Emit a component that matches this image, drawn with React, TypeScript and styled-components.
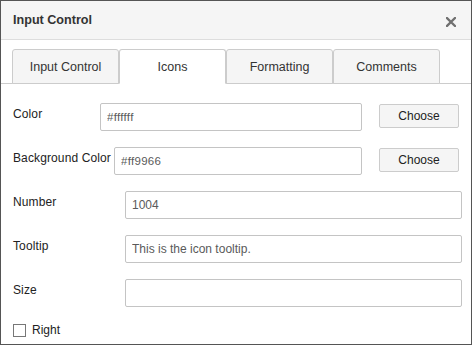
import React, { useState } from 'react';
import styled, { createGlobalStyle } from 'styled-components';

const GlobalStyle = createGlobalStyle`
  html, body {
    margin: 0;
    padding: 0;
    background: #ffffff;
  }
  * {
    box-sizing: border-box;
  }
`;

const tabs = ['Input Control', 'Icons', 'Formatting', 'Comments'];

export default function App() {
  const [active, setActive] = useState(1);
  const [right, setRight] = useState(false);

  return (
    <>
      <GlobalStyle />
      <Dialog>
        <Header>
          <Title>Input Control</Title>
          <Close aria-label="Close">
            <svg width="10" height="10" viewBox="0 0 10 10">
              <path d="M1 1 L9 9 M9 1 L1 9" stroke="#707070" strokeWidth="2.3" strokeLinecap="square" />
            </svg>
          </Close>
        </Header>
        <TabBar>
          {tabs.map((t, i) => (
            <Tab key={t} $active={i === active} onClick={() => setActive(i)}>
              {t}
            </Tab>
          ))}
        </TabBar>
        <Body>
          <Row>
            <Label $min={87}>Color</Label>
            <Input defaultValue="#ffffff" $small />
            <Button>Choose</Button>
          </Row>
          <Row>
            <Label $min={87}>Background Color</Label>
            <Input defaultValue="#ff9966" $small $gap={3} />
            <Button>Choose</Button>
          </Row>
          <Row $wide>
            <Label $min={112}>Number</Label>
            <Input defaultValue="1004" />
          </Row>
          <Row $wide>
            <Label $min={112}>Tooltip</Label>
            <Input defaultValue="This is the icon tooltip." />
          </Row>
          <Row $wide>
            <Label $min={112}>Size</Label>
            <Input defaultValue="" />
          </Row>
          <CheckRow>
            <Check type="checkbox" checked={right} onChange={() => setRight(!right)} />
            Right
          </CheckRow>
        </Body>
      </Dialog>
    </>
  );
}

const Dialog = styled.div`
  width: 472px;
  height: 345px;
  border: 1px solid #555555;
  background: #ffffff;
  font-family: "Liberation Sans", Arial, sans-serif;
  color: #333333;
  overflow: hidden;
`;

const Header = styled.div`
  height: 39px;
  background: #f5f5f5;
  border-bottom: 1px solid #dddddd;
  display: flex;
  align-items: center;
  justify-content: space-between;
  padding: 0 15px 0 12px;
`;

const Title = styled.div`
  font-size: 12.6px;
  font-weight: bold;
  color: #333333;
`;

const Close = styled.div`
  display: flex;
  width: 10px;
  height: 10px;
  margin-top: 3px;
  cursor: pointer;
`;

const TabBar = styled.div`
  display: flex;
  align-items: flex-end;
  height: 44px;
  padding-left: 11px;
  border-bottom: 1px solid #cccccc;
`;

const Tab = styled.div<{ $active?: boolean }>`
  width: 107px;
  height: 35px;
  margin-bottom: -1px;
  display: flex;
  align-items: center;
  justify-content: center;
  font-size: 12.5px;
  color: #333333;
  background: ${(p) => (p.$active ? '#ffffff' : '#f5f5f5')};
  border: 1px solid #cccccc;
  border-bottom-color: ${(p) => (p.$active ? '#ffffff' : '#cccccc')};
  border-radius: 3px 3px 0 0;
  cursor: pointer;
`;

const Body = styled.div`
  padding: 19px 0 0 12px;
`;

const Row = styled.div<{ $wide?: boolean }>`
  display: flex;
  align-items: flex-start;
  height: 28px;
  margin-bottom: 16px;
  padding-right: ${(p) => (p.$wide ? '9px' : '12px')};
`;

const Label = styled.label<{ $min: number }>`
  min-width: ${(p) => p.$min}px;
  font-size: 12px;
  letter-spacing: 0.12px;
  color: #222222;
  padding-top: 4px;
  white-space: nowrap;
`;

const Input = styled.input<{ $small?: boolean; $gap?: number }>`
  flex: 1;
  min-width: 0;
  height: 28px;
  margin-left: ${(p) => p.$gap ?? 0}px;
  border: 1px solid #c4c4c4;
  border-radius: 2px;
  padding: 0 6px;
  font-family: "Liberation Sans", Arial, sans-serif;
  font-size: ${(p) => (p.$small ? '11.5px' : '12px')};
  letter-spacing: ${(p) => (p.$small ? '0.3px' : '0')};
  color: #5a5a5a;
  outline: none;
`;

const Button = styled.button`
  width: 80px;
  height: 24px;
  margin: 1px 0 0 17px;
  background: #f5f5f5;
  border: 1px solid #cccccc;
  border-radius: 2px;
  font-family: "Liberation Sans", Arial, sans-serif;
  font-size: 12px;
  color: #222222;
  padding: 0;
  cursor: pointer;
`;

const CheckRow = styled.label`
  display: flex;
  align-items: center;
  gap: 6px;
  font-size: 12px;
  color: #222222;
`;

const Check = styled.input`
  appearance: none;
  width: 13px;
  height: 13px;
  margin: 0;
  border: 1px solid #777777;
  background: #ffffff;
  &:checked {
    background: #555555;
  }
`;
